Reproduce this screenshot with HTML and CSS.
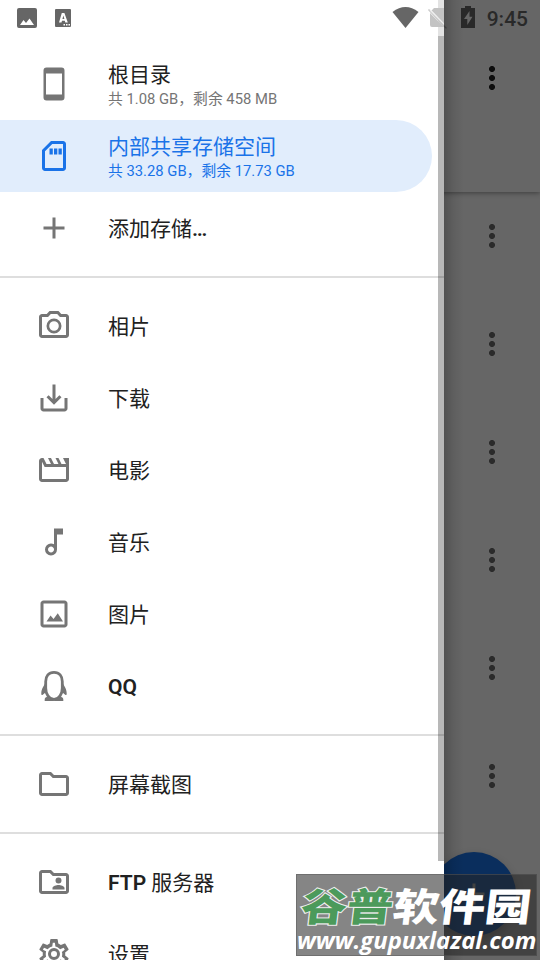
FILE: index.html
```html
<!DOCTYPE html>
<html lang="zh-CN">
<head>
<meta charset="utf-8">
<title>文件管理</title>
<link rel="stylesheet" href="styles.css">
</head>
<body>
<div class="screen">
  <main class="content">
    <header class="appbar"><i class="more strong"></i></header>
    <div class="file"><i class="more"></i></div>
    <div class="file"><i class="more"></i></div>
    <div class="file"><i class="more"></i></div>
    <div class="file"><i class="more"></i></div>
    <div class="file"><i class="more"></i></div>
    <div class="file"><i class="more"></i></div>
    <div class="fab"><svg width="36" height="36" viewBox="0 0 24 24"><path fill="#666" d="M19 13h-6v6h-2v-6H5v-2h6V5h2v6h6z"/></svg></div>
  </main>

  <nav class="drawer">
    <a class="row">
      <svg class="icon" viewBox="0 0 36 36"><path fill-rule="evenodd" d="M10.500 1.500h15a3 3 0 0 1 3 3v27a3 3 0 0 1-3 3h-15a3 3 0 0 1-3-3v-27a3 3 0 0 1 3-3zM10 7.500v21h16v-21z"/></svg>
      <span class="label"><b>根目录</b><small>共 1.08 GB，剩余 458 MB</small></span>
    </a>
    <a class="row selected">
      <svg class="icon" viewBox="0 0 24 24"><path d="M18 2h-8L4 8v12c0 1.100.9 2 2 2h12c1.100 0 2-.9 2-2V4c0-1.100-.9-2-2-2zm0 18H6V8.830L10.830 4H18v16zM9 7h2.200v4H9zm3 0h2.200v4H12zm3 0h2.200v4H15z"/></svg>
      <span class="label"><b>内部共享存储空间</b><small>共 33.28 GB，剩余 17.73 GB</small></span>
    </a>
    <a class="row">
      <svg class="icon" viewBox="0 0 24 24"><path d="M19 13h-6v6h-2v-6H5v-2h6V5h2v6h6z"/></svg>
      <span class="label"><b>添加存储<em>…</em></b></span>
    </a>
    <hr>
    <a class="row">
      <svg class="icon" viewBox="0 0 24 24"><path d="M20 4h-3.170L15 2H9L7.170 4H4c-1.100 0-2 .9-2 2v12c0 1.100.9 2 2 2h16c1.100 0 2-.9 2-2V6c0-1.100-.9-2-2-2zm0 14H4V6h4.050l1.830-2h4.240l1.830 2H20v12zM12 7a5 5 0 1 0 0 10 5 5 0 0 0 0-10zm0 8.200a3.200 3.200 0 1 1 0-6.400 3.200 3.200 0 0 1 0 6.400z"/></svg>
      <span class="label"><b>相片</b></span>
    </a>
    <a class="row">
      <svg class="icon" viewBox="0 0 24 24"><path d="M19 12v7H5v-7H3v7c0 1.100.9 2 2 2h14c1.100 0 2-.9 2-2v-7h-2zm-6 .670 2.590-2.580L17 11.500l-5 5-5-5 1.410-1.410L11 12.670V3h2z"/></svg>
      <span class="label"><b>下载</b></span>
    </a>
    <a class="row">
      <svg class="icon" viewBox="0 0 24 24"><path d="m18 4 2 4h-3l-2-4h-2l2 4h-3l-2-4H8l2 4H7L5 4H4c-1.100 0-1.990.9-1.990 2L2 18c0 1.100.9 2 2 2h16c1.100 0 2-.9 2-2V4h-4zM4 18V6.470L5.760 10H20v8H4z"/></svg>
      <span class="label"><b>电影</b></span>
    </a>
    <a class="row">
      <svg class="icon" viewBox="0 0 24 24"><path d="m12 3 .010 10.550c-.590-.340-1.270-.550-2-.550a4 4 0 1 0 3.990 4V7h4V3h-6zm-1.990 16c-1.100 0-2-.9-2-2s.9-2 2-2 2 .9 2 2-.9 2-2 2z"/></svg>
      <span class="label"><b>音乐</b></span>
    </a>
    <a class="row">
      <svg class="icon" viewBox="0 0 24 24"><path d="M19 5v14H5V5h14m0-2H5c-1.100 0-2 .9-2 2v14c0 1.100.9 2 2 2h14c1.100 0 2-.9 2-2V5c0-1.100-.9-2-2-2zM7 17l2.700-4 2 2.400 2.800-3.900L18 17z"/></svg>
      <span class="label"><b>图片</b></span>
    </a>
    <a class="row">
      <svg class="icon" viewBox="0 0 36 36"><path d="M18 4.300c-5.400 0-8.300 3.700-8.300 9.200v6.500c0 5.500 3.100 11.500 8.300 11.500s8.300-6 8.300-11.500v-6.500c0-5.500-2.900-9.200-8.300-9.200z" fill="none" stroke="#757575" stroke-width="2.800"/><path d="M9.500 14.500C8 18 5.300 20.500 5.300 25.500c0 2.200.9 2 3.800-.8zm17 0c1.500 3.500 4.200 6 4.200 11 0 2.200-.9 2-3.800-.8zM12 28.800c-2 .2-3.300 1-3.300 2.700V33h8.300l1-.8 1 .8h8.300v-1.500c0-1.700-1.300-2.500-3.300-2.700l-3 2h-6z"/></svg>
      <span class="label"><b><em>QQ</em></b></span>
    </a>
    <hr>
    <a class="row">
      <svg class="icon" viewBox="0 0 24 24"><path d="m9.170 6 2 2H20v10H4V6h5.170M10 4H4c-1.100 0-1.990.9-1.990 2L2 18c0 1.100.9 2 2 2h16c1.100 0 2-.9 2-2V8c0-1.100-.9-2-2-2h-8l-2-2z"/></svg>
      <span class="label"><b>屏幕截图</b></span>
    </a>
    <hr>
    <a class="row">
      <svg class="icon" viewBox="0 0 24 24"><path d="M20 6h-8l-2-2H4c-1.100 0-1.990.9-1.990 2L2 18c0 1.100.9 2 2 2h16c1.100 0 2-.9 2-2V8c0-1.100-.9-2-2-2zm0 12H4V6h5.170l2 2H20v10zm-5-5a2 2 0 1 0 0-4 2 2 0 0 0 0 4zm-4 4h8v-1c0-1.330-2.670-2-4-2s-4 .670-4 2v1z" /></svg>
      <span class="label"><b><em>FTP</em> 服务器</b></span>
    </a>
    <a class="row">
      <svg class="icon" viewBox="0 0 24 24"><path d="M19.430 12.980c.04-.32.07-.64.07-.98s-.03-.66-.07-.98l2.110-1.650c.19-.15.24-.42.12-.64l-2-3.460c-.12-.22-.39-.3-.61-.22l-2.490 1c-.52-.4-1.080-.73-1.690-.98l-.38-2.650C14.460 2.180 14.250 2 14 2h-4c-.25 0-.46.18-.49.42l-.38 2.650c-.61.25-1.170.59-1.690.98l-2.490-1c-.23-.09-.49 0-.61.22l-2 3.460c-.13.22-.07.49.12.64l2.110 1.650c-.04.32-.07.65-.07.98s.03.66.07.98l-2.110 1.650c-.19.15-.24.42-.12.64l2 3.460c.12.22.39.3.61.22l2.490-1c.52.4 1.080.73 1.690.98l.38 2.650c.03.24.24.42.49.42h4c.25 0 .46-.18.49-.42l.38-2.650c.61-.25 1.170-.59 1.690-.98l2.490 1c.23.09.49 0 .61-.22l2-3.460c.12-.22.07-.49-.12-.64zm-1.980-1.710c.04.31.05.52.05.73s-.02.43-.05.73l-.14 1.130.89.7 1.080.84-.7 1.210-1.270-.51-1.040-.42-.9.68c-.43.32-.84.56-1.250.73l-1.060.43-.16 1.130-.2 1.350h-1.400l-.35-2.480-1.060-.43c-.43-.18-.83-.41-1.230-.71l-.91-.7-1.060.43-1.270.51-.7-1.210 1.970-1.540-.14-1.130a7 7 0 0 1 0-1.470l.14-1.130L4.620 9.100l.7-1.210 1.270.51 1.040.42.9-.68c.43-.32.84-.56 1.250-.73l1.060-.43.36-2.480h1.390l.35 2.480 1.060.43c.43.18.83.41 1.230.71l.91.7 1.060-.43 1.270-.51.7 1.210-1.960 1.550zM12 8a4 4 0 1 0 0 8 4 4 0 0 0 0-8zm0 6a2 2 0 1 1 0-4 2 2 0 0 1 0 4z"/></svg>
      <span class="label"><b>设置</b></span>
    </a>
    <i class="scrollbar"></i>
  </nav>

  <div class="statusbar">
    <svg width="540" height="36" viewBox="0 0 540 36">
      <path fill="#666" d="M19 8h16q2 0 2 2v16q0 2-2 2H19q-2 0-2-2V10q0-2 2-2zm1 17h14l-4.500-6.500-3.500 4.500-2.500-3z"/>
      <path fill="#666" fill-rule="evenodd" d="M56 9h14q1 0 1 1v16q0 1-1 1H56q-1 0-1-1V10q0-1 1-1zm3 13.500h2.500l.5-1.700h2.800l.5 1.700h2.500L64.400 13h-2.600zm3.400-3.600 1-3.400 1 3.400z"/>
      <path fill="#fff" d="M63.500 24h1.500v1.500h-1.500zm2.500 0h1.500v1.500H66zm2.500 0H70v1.500h-1.500z"/>
      <path fill="#666" d="M392.500 12q13-10 26 0l-13 16z"/>
      <path fill="#c3c3c3" d="M434 8h10v15.500L431.500 10.500zM430 13l14 14h-12q-2 0-2-2zM428 10l1-1 15 15v3z"/>
      <path fill="#eee" d="m430.500 9.500 13.500 13.700v1.800l-14.500-14.500z"/>
      <path fill="#4b4b4b" d="m444 25 3 3-1 .8-2-1.800z"/>
      <path fill="#292929" d="M465 6h6v2h4v20h-14V8h4z"/>
      <path fill="#666" d="m469.500 11-5.500 8h3.300v6l5.200-8.300h-3z"/>
    </svg>
    <time>9:45</time>
  </div>

  <div class="watermark">
    <div class="brand"><span>谷普</span>软件园</div>
    <div class="site">www.gupuxlazal.com</div>
  </div>
</div>
</body>
</html>
```
FILE: styles.css
```css
* { box-sizing: border-box; }
body { margin: 0; }
.screen {
  position: relative;
  width: 540px;
  height: 960px;
  overflow: hidden;
  background: #666;
  font-family: Roboto, "Noto Sans CJK SC", sans-serif;
}
.content { height: 960px; }
.appbar {
  height: 192px;
  padding: 60px 30px;
  display: flex;
  justify-content: flex-end;
  box-shadow: 0 1px 5px rgba(0,0,0,.4);
}
.file {
  height: 108px;
  padding: 26px 30px;
  display: flex;
  justify-content: flex-end;
}
.more {
  width: 36px;
  height: 36px;
  background:
    radial-gradient(circle at 18px 9px, #2b2b2b 2.600px, transparent 3.400px),
    radial-gradient(circle at 18px 18px, #2b2b2b 2.600px, transparent 3.400px),
    radial-gradient(circle at 18px 27px, #2b2b2b 2.600px, transparent 3.400px);
}
.strong { filter: brightness(.3); }
.fab {
  position: absolute;
  left: 432px;
  top: 852px;
  width: 84px;
  height: 84px;
  border-radius: 50%;
  background: #0a2e5d;
  display: grid;
  place-items: center;
  box-shadow: 0 4px 9px rgba(0,0,0,.25);
}
.drawer {
  position: absolute;
  left: 0;
  top: 0;
  width: 444px;
  height: 960px;
  padding-top: 48px;
  overflow: hidden;
  background: #fff;
}
.screen::after {
  content: "";
  position: absolute;
  left: 444px;
  top: 0;
  width: 20px;
  height: 960px;
  background: linear-gradient(90deg, rgba(0,0,0,.2), rgba(0,0,0,.07) 50%, transparent);
}
.row {
  display: flex;
  align-items: center;
  height: 72px;
  padding-left: 36px;
  color: #212121;
}
.icon { width: 36px; height: 36px; fill: #757575; }
.label { display: flex; flex-direction: column; margin-left: 36px; padding-top: 2px; }
.label:has(small) { padding-top: 6px; }
.label b { font-size: 21px; font-weight: 400; line-height: 24px; white-space: nowrap; }
.label em { font-style: normal; font-weight: 600; }
.label small { font-size: 14.800px; line-height: 24px; color: #757575; white-space: nowrap; }
.selected {
  width: 432px;
  border-radius: 0 36px 36px 0;
  background: #e1edfc;
  color: #1a73e8;
}
.selected .icon { fill: #1a73e8; }
.selected small { color: #1a73e8; }
hr { height: 2px; margin: 12px 0; border: 0; background: #dedede; }
.scrollbar {
  position: absolute;
  right: 0;
  top: 36px;
  width: 6px;
  height: 825px;
  background: rgba(0,0,0,.28);
}
.statusbar { position: absolute; left: 0; top: 0; width: 540px; height: 36px; }
.statusbar::before {
  content: "";
  position: absolute;
  left: 438px;
  width: 6px;
  height: 36px;
  background: #e3e3e3;
}
.statusbar svg { position: relative; display: block; }
.statusbar time {
  position: absolute;
  right: 12px;
  top: 6px;
  font-size: 21px;
  font-weight: 500;
  line-height: 26px;
  color: #292929;
}
.watermark {
  position: absolute;
  z-index: 1;
  left: 296px;
  top: 874px;
  width: 241px;
  height: 82px;
  border: 1px solid rgba(90,90,90,.5);
  background: rgba(38,38,38,.56);
  color: #fff;
  white-space: nowrap;
}
.brand {
  height: 52px;
  padding: 0 0 0 5px;
  font: 900 46px/61px "Noto Sans CJK SC", sans-serif;
  transform: skewX(-7deg) scaleY(.84);
}
.brand span { color: #4c9a5b; -webkit-text-stroke: 2.500px #eee; paint-order: stroke fill; }
.site {
  font: italic 700 23.900px/26px "Open Sans", sans-serif;
}
```
